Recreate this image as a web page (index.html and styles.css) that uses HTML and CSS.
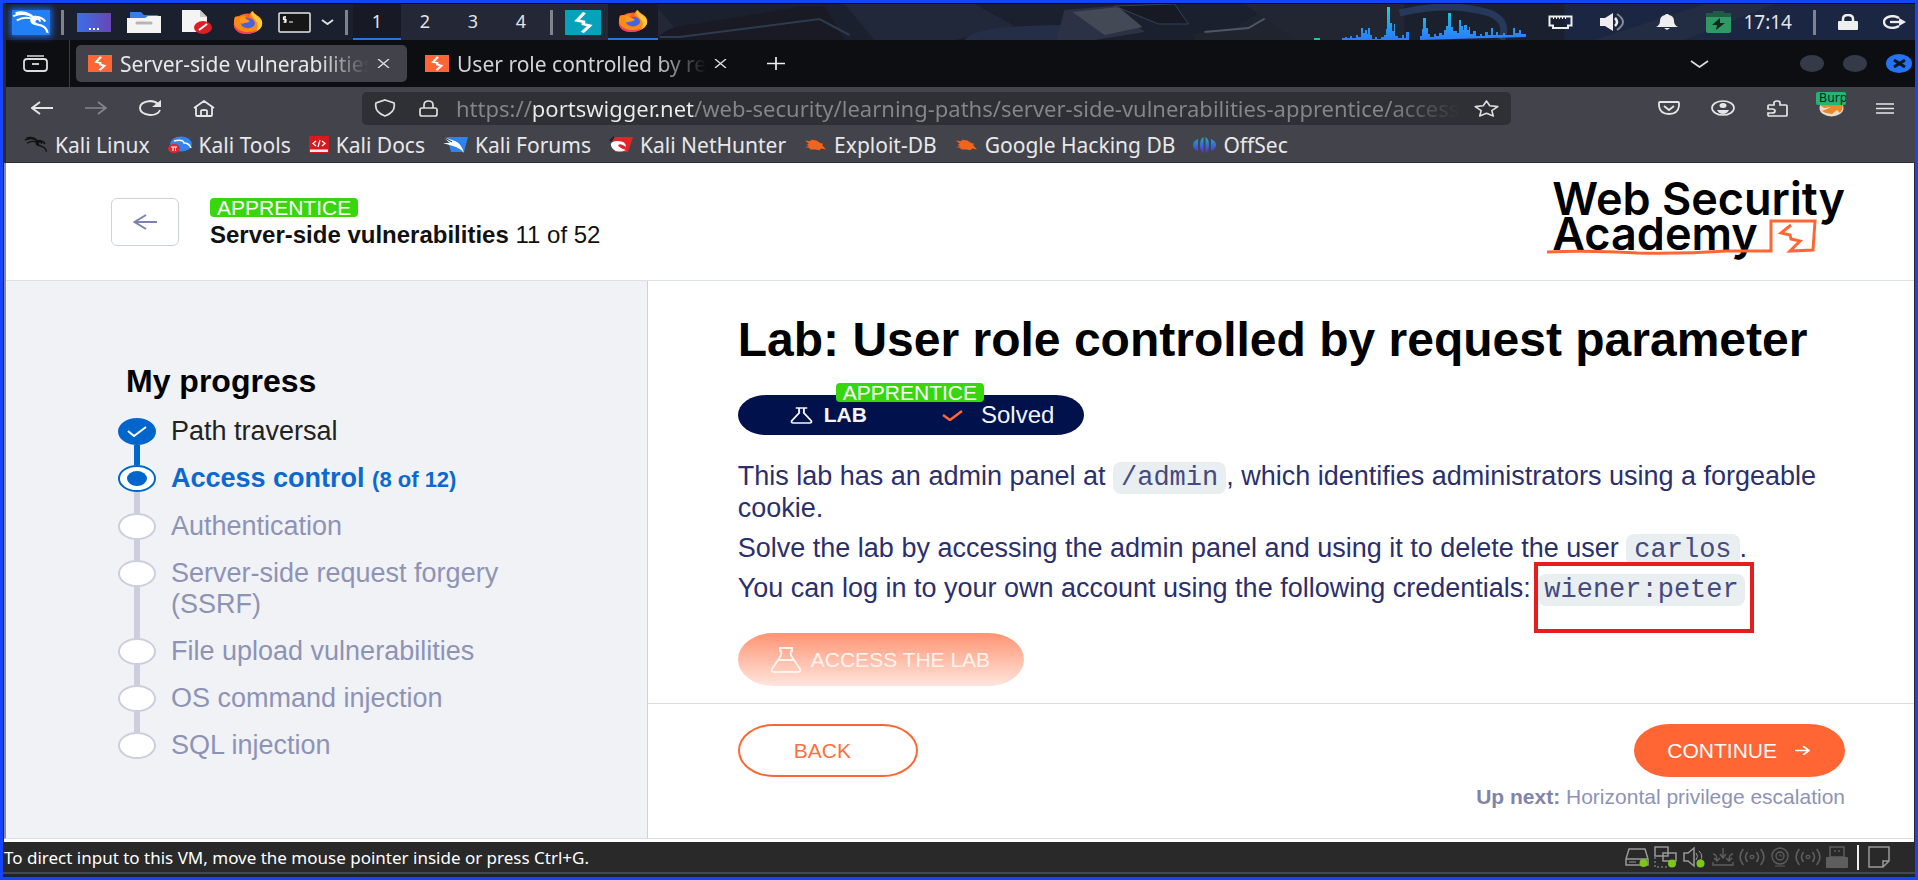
FILE: index.html
```html
<!DOCTYPE html>
<html lang="en">
<head>
<meta charset="utf-8">
<title>Server-side vulnerabilities</title>
<link rel="stylesheet" href="styles.css">
</head>
<body>
<svg class="defs" aria-hidden="true">
  <symbol id="dragon" viewBox="0 0 32 24" preserveAspectRatio="none">
    <path d="M1 6C7 2 14 4 18 7M3 3c6-2 12 0 16 5M4 10c5-3 10-3 14-1M18 7c5-1 8 1 10 4M18 7c-3 3-2 6 3 7 6 1 8 3 9 8M20 8c3 0 4 2 3 3" fill="none" stroke="currentColor" stroke-width="1.9"/>
    <path d="M17 6c4-1 6 0 7 2l-4 2c-1 2 1 3 4 4-4 1-8-1-8-4z" fill="currentColor"/>
  </symbol>
  <symbol id="firefox" viewBox="0 0 32 32" preserveAspectRatio="none">
    <circle cx="16" cy="17.500" r="14" fill="#ff5a2c"/>
    <path d="M3 8c2-1 4-1 5 0 2-2 5-2 7-1-2 1-3 3-3 5l5 2-4 3c4 2 8-1 9-4-1-2-2-4-5-5 1-4 1-6 4-8 1 5 8 7 9 14 1 8-4 16-13 17C8 32 1 26 2 17c0-4 0-6 1-9z" fill="#ff8a16"/>
    <circle cx="16" cy="17" r="7" fill="#4a62e0"/>
    <path d="M8 9c3-1 5 0 6 2l4 3c-2 3-5 2-8 4-1-2-3-6-2-9z" fill="#ff9a1f"/>
    <path d="M20 0c1 5 9 8 10 15 1 6-2 12-8 14 4-4 5-10 2-15-2-4-6-7-4-14z" fill="#ffc83d"/>
    <path d="M2 17c1 8 8 13 15 12 4 0 7-2 9-4-3 6-9 8-14 7C5 31 1 24 2 17z" fill="#f0405a"/>
  </symbol>
  <symbol id="burp" viewBox="0 0 24 24" preserveAspectRatio="none">
    <path d="M0 0h24v24H0z" fill="var(--tile)"/>
    <path d="M13 2.500L8 10l4.300 1.300V13.500L16.500 15 11.500 21.500" fill="none" stroke="#fff" stroke-width="2.400"/>
  </symbol>
  <symbol id="flask" viewBox="0 0 24 24" preserveAspectRatio="none">
    <path d="M6 1.500h12M9.500 2v6.500L1.800 19.500Q1 22.500 3.500 22.500h17Q23 22.500 22.200 19.500L14.500 8.500V2" fill="none" stroke="currentColor" stroke-width="2"/>
  </symbol>
  <symbol id="exploit" viewBox="0 0 24 16" preserveAspectRatio="none">
    <path d="M1 3l5 1 2-2 5 1 4 3 3 1-1 2 4 5-5-1-2 2-4-1-5 0-2-2-4-1 4-1-2-2 2-1z" fill="#f0641e"/>
  </symbol>
  <symbol id="signal" viewBox="0 0 24 18" preserveAspectRatio="none">
    <path d="M4 1Q-2 9 4 17M8 4q-4 5 0 10M20 1q6 8 0 16M16 4q4 5 0 10" fill="none" stroke="currentColor" stroke-width="1.500"/>
    <circle cx="12" cy="9" r="1.700" fill="none" stroke="currentColor" stroke-width="1.300"/>
  </symbol>
</svg>

<div class="frame">
  <header class="panel">
    <svg class="wallpaper" viewBox="0 0 1912 36" preserveAspectRatio="xMidYMid slice" aria-hidden="true">
      <path d="M0 0h1912v36H0z" fill="#1b202e"/>
      <path d="M380 0h270l30 36H350z" fill="#232736"/>
      <path d="M650 36q12-14 40-16l110-18h20l20 34z" fill="#191a23"/>
      <path d="M655 33h20l140-18 30 16" fill="none" stroke="#2e3b4e" stroke-width="2"/>
      <path d="M840 0h130l40 22-60 14H870z" fill="#20283a"/>
      <path d="M960 36q10-12 60-14l60-2v16z" fill="#242e46"/>
      <path d="M1060 6l50-4 30 26-50 8h-38z" fill="#2b3246"/>
      <path d="M1068 8l46-5 24 20-38 8z" fill="#434955"/>
      <path d="M1110 2l44 18h30L1170 0z" fill="#171923" stroke="#33405a"/>
      <path d="M1190 30l40-6 36-22 36 34h-112z" fill="#20242f"/>
      <path d="M1200 28l44-4 24-14" fill="none" stroke="#4e5766" stroke-width="2"/>
      <path d="M1240 0h160v36h-110z" fill="#222532"/>
      <path d="M1395 9q50-12 90 0 20 8 12 27" fill="none" stroke="#26395a" stroke-width="7"/>
      <path d="M1560 0h352v36h-352z" fill="#1b2742"/>
      <path d="M1590 36l110-36h70l-90 36z" fill="#222c42"/>
    </svg>
    <nav class="launchers" aria-label="Launchers">
      <button class="slot kali" aria-label="Applications"><svg width="38" height="25"><use href="#dragon"/></svg></button>
      <span class="divider"></span>
      <button class="slot" aria-label="Show desktop"><svg width="34" height="19" viewBox="0 0 34 19"><defs><linearGradient id="desk"><stop stop-color="#3a6fe8"/><stop offset="1" stop-color="#6a45b5"/></linearGradient></defs><path d="M0 0h34v19H0z" fill="url(#desk)"/><path d="M12 16h10" stroke="#fff" stroke-width="2" stroke-dasharray="2 2"/></svg></button>
      <button class="slot" aria-label="Files"><svg width="34" height="21" viewBox="0 0 34 21"><path d="M3 0h11l3 3h14v8H3z" fill="#3b7de8"/><path d="M0 6h18l3-2h13v17H0z" fill="#f4f4f4"/><path d="M10 11h14" stroke="#b5b5b5" stroke-width="3" stroke-linecap="round"/></svg></button>
      <button class="slot document" aria-label="Text editor"><svg width="32" height="24" viewBox="0 0 32 24"><path d="M2 0h18l7 7v15H2z" fill="#f4f4f4"/><path d="M20 0v7h7z" fill="#c9c9c9"/><ellipse cx="23" cy="17.500" rx="9" ry="6.500" fill="#dc1f26"/><path d="M19 20l8-6" stroke="#fff" stroke-width="2"/></svg></button>
      <button class="slot" aria-label="Firefox"><svg width="32" height="23"><use href="#firefox"/></svg></button>
      <button class="slot term" aria-label="Terminal"><svg width="33" height="21" viewBox="0 0 33 21"><rect x="1" y="1" width="31" height="19" rx="1" fill="#161616" stroke="#e8e8e8" stroke-width="1.500"/><path d="M8 5H5.500v2.500H8V10H5.500M7 4v7M11 10h4" fill="none" stroke="#fff" stroke-width="1.200"/></svg></button>
      <button class="slot more" aria-label="More terminals"><svg width="13" height="6" viewBox="0 0 13 6"><path d="M1 1l5.500 4L12 1" fill="none" stroke="#ddd" stroke-width="2"/></svg></button>
      <span class="divider"></span>
      <button class="workspace current">1</button><button class="workspace">2</button><button class="workspace">3</button><button class="workspace">4</button>
      <span class="divider"></span>
      <button class="slot teal" aria-label="Burp Suite"><svg width="36" height="25"><use href="#burp"/></svg></button>
      <button class="slot task" aria-label="Firefox window"><svg width="32" height="22"><use href="#firefox"/></svg></button>
    </nav>
    <div class="tray">
      <svg class="graph" width="220" height="34" viewBox="0 0 220 34" aria-hidden="true">
        <defs><linearGradient id="wave" x1="0" y1="0" x2="0" y2="34" gradientUnits="userSpaceOnUse"><stop stop-color="#18d8d0"/><stop offset=".6" stop-color="#239df0"/><stop offset="1" stop-color="#2a7bff"/></linearGradient></defs>
        <path d="M0 32h6v2H0z" fill="#18c8a8"/>
        <path fill="url(#wave)" d="M28 34v-2h3v-1h2v1h3v-2h2v2h4v-3h2v2h3v-9h2v5h2v-3h2v4h1v-6h2v7h2v4h3v-2h2v2h4v-2h3v-2h2v-6h1V1h3v16h2v8h2v-7h1v12h3v2h4v-3h2v3h2v-6h3v8zM104 34h2v-4h2v-7h1V12h3v10h2v6h2v3h4v-3h2v2h3v-3h3v2h2v-5h2v-4h2V7h3v14h2v4h4v2h2V14h2v6h2v4h1v-5h3v5h2v-3h1v7h3v-3h3v5h4v-2h2v2h3v-4h3v3h3v-7h2v7h3v-3h2v3h5v-2h2v2h8v-7h2v5h4v-3h2v4h5v3z"/>
      </svg>
      <button class="slot" aria-label="Network"><svg width="25" height="15" viewBox="0 0 25 15"><path d="M1.500 1.500h22v9H20V13H5v-2.500H1.500z" fill="none" stroke="#eee" stroke-width="2"/><path d="M5 3h15" stroke="#eee" stroke-width="2" stroke-dasharray="1 2"/></svg></button>
      <button class="slot" aria-label="Volume"><svg width="27" height="18" viewBox="0 0 27 18"><path d="M0 5h5l8-5v18l-8-5H0z" fill="#eee"/><path d="M15 5q4 4 0 8" fill="none" stroke="#eee" stroke-width="2.500"/><path d="M17 1q12 8 0 16" fill="none" stroke="#858b95" stroke-width="2"/></svg></button>
      <button class="slot" aria-label="Notifications"><svg width="22" height="16" viewBox="0 0 22 16"><path d="M11 0q2 0 2 1 5 1 5 6 0 4 4 6H0q4-2 4-6 0-5 5-6 0-1 2-1zM8 14h6l-3 2z" fill="#eee"/></svg></button>
      <button class="slot battery" aria-label="Battery"><svg width="25" height="22" viewBox="0 0 25 22"><path d="M7 0h11v3H7z" fill="#205c45"/><rect y="2" width="25" height="20" rx="2" fill="#2f9a66"/><path d="M0 4q0-2 2-2h21q2 0 2 2v2H0z" fill="#205c45"/><path d="M14 7l-8 7h5l-1 5 9-7h-5z" fill="#12281f"/></svg></button>
      <time class="clock">17:14</time>
      <span class="divider"></span>
      <button class="slot" aria-label="Lock"><svg width="20" height="16" viewBox="0 0 20 16"><path d="M5 8V5q0-4 5-4t5 4v3" fill="none" stroke="#eee" stroke-width="2.500"/><rect y="7" width="20" height="9" rx="1" fill="#eee"/></svg></button>
      <button class="slot" aria-label="Log out"><svg width="23" height="14" viewBox="0 0 23 14"><path d="M16 3Q13 1 9 1 1 2 1 7t8 6q4 0 7-2" fill="none" stroke="#eee" stroke-width="2.300"/><path d="M7 7h10" stroke="#eee" stroke-width="2.300"/><path d="M16 3l7 4-7 4z" fill="#eee"/></svg></button>
    </div>
  </header>

  <div class="tabbar">
    <button class="archive" aria-label="Firefox View"><svg width="25" height="17" viewBox="0 0 25 17"><path d="M4 1h17" stroke="#ddd" stroke-width="1.500"/><rect x="1" y="4" width="23" height="12" rx="3" fill="none" stroke="#ddd" stroke-width="1.800"/><path d="M9 9h7" stroke="#ddd" stroke-width="1.800"/></svg></button>
    <div class="tab active"><svg class="orange" width="24" height="17"><use href="#burp"/></svg><span class="tab-title">Server-side vulnerabilities</span><button class="close" aria-label="Close tab"><svg width="13" height="9" viewBox="0 0 13 9"><path d="M1 0l11 9M12 0L1 9" stroke="#ddd" stroke-width="1.400"/></svg></button></div>
    <div class="tab"><svg class="orange" width="24" height="17"><use href="#burp"/></svg><span class="tab-title">User role controlled by request</span><button class="close" aria-label="Close tab"><svg width="13" height="9" viewBox="0 0 13 9"><path d="M1 0l11 9M12 0L1 9" stroke="#ddd" stroke-width="1.400"/></svg></button></div>
    <button class="newtab" aria-label="New tab"><svg width="18" height="13" viewBox="0 0 18 13"><path d="M0 6.500h18M9 0v13" stroke="#eee" stroke-width="1.700"/></svg></button>
    <div class="window-controls">
      <button aria-label="List all tabs"><svg width="19" height="8" viewBox="0 0 19 8"><path d="M1 1l8.500 6L18 1" fill="none" stroke="#ddd" stroke-width="1.700"/></svg></button>
      <button class="dot" aria-label="Minimise"></button>
      <button class="dot" aria-label="Maximise"></button>
      <button class="dot quit" aria-label="Close"><svg width="13" height="9" viewBox="0 0 13 9"><path d="M1 1l11 7M12 1L1 8" stroke="#0e1626" stroke-width="3"/></svg></button>
    </div>
  </div>

  <div class="toolbar">
    <div class="nav-buttons">
      <button aria-label="Back"><svg width="22" height="14" viewBox="0 0 22 14"><path d="M22 7H2M9 1L1 7l8 6" fill="none" stroke="#e6e6e6" stroke-width="1.900"/></svg></button>
      <button aria-label="Forward"><svg width="22" height="14" viewBox="0 0 22 14"><path d="M0 7h20M13 1l8 6-8 6" fill="none" stroke="#85868b" stroke-width="1.700"/></svg></button>
      <button aria-label="Reload"><svg width="23" height="16" viewBox="0 0 23 16"><path d="M19 4Q16 1 11 1 1 2 1 8t10 7q8 0 10-5" fill="none" stroke="#e6e6e6" stroke-width="1.900"/><path d="M22 0v7h-9z" fill="#e6e6e6"/></svg></button>
      <button aria-label="Home"><svg width="22" height="17" viewBox="0 0 22 17"><path d="M1 8l10-7 10 7M3 7v8q0 1 1 1h14q1 0 1-1V7M8 16v-5q0-1 3-1t3 1v5" fill="none" stroke="#e6e6e6" stroke-width="1.800"/></svg></button>
    </div>
    <div class="urlbar">
      <svg width="22" height="18" viewBox="0 0 22 18"><path d="M11 1l9 3q2 9-9 13Q0 13 2 4z" fill="none" stroke="#ddd" stroke-width="1.700"/></svg>
      <svg width="19" height="17" viewBox="0 0 19 17"><path d="M5 8V5q0-4 4.500-4T14 5v3" fill="none" stroke="#ddd" stroke-width="1.700"/><rect x="1" y="8" width="17" height="8" rx="2" fill="none" stroke="#ddd" stroke-width="1.700"/></svg>
      <input class="address" type="text" aria-label="Address" value="https://portswigger.net/web-security/learning-paths/server-side-vulnerabilities-apprentice/access-control">
      <button aria-label="Bookmark this page"><svg width="25" height="17" viewBox="0 0 25 17"><path d="M12.500 1l3.300 4.800 8 .8-6 4 1.500 5.400-6.800-2.700L5.700 16l1.500-5.400-6-4 8-.8z" fill="none" stroke="#ddd" stroke-width="1.600" stroke-linejoin="round"/></svg></button>
    </div>
    <div class="tool-buttons">
      <button aria-label="Pocket"><svg width="22" height="14" viewBox="0 0 22 14"><path d="M1 2q0-1 1-1h18q1 0 1 1v3q-1 8-10 8T1 5zM6 5l5 4 5-4" fill="none" stroke="#e6e6e6" stroke-width="1.800"/></svg></button>
      <button aria-label="Account"><svg width="24" height="16" viewBox="0 0 24 16"><ellipse cx="12" cy="8" rx="11" ry="7" fill="none" stroke="#e6e6e6" stroke-width="1.700"/><ellipse cx="12" cy="5.500" rx="3.500" ry="2.500" fill="#e6e6e6"/><path d="M6 10h12q-2 4-6 4t-6-4z" fill="#e6e6e6"/></svg></button>
      <button aria-label="Extensions"><svg width="21" height="17" viewBox="0 0 21 17"><path d="M7 5V3q0-2 3-2t3 2v2h6q1 0 1 1v9q0 1-1 1H2q-1 0-1-1v-2h4q3 0 3-2T5 9H1V6q0-1 1-1z" fill="none" stroke="#e6e6e6" stroke-width="1.700"/></svg></button>
      <button class="foxy" aria-label="FoxyProxy"><svg width="25" height="17" viewBox="0 0 25 17"><ellipse cx="12.500" cy="8" rx="12" ry="8.500" fill="#e9dccb"/><path d="M1 5h23q0 4-3 8l-3-3-5 4-6-1-4-2 5-2 4-2-7 1z" fill="#e88a2a"/></svg><span class="proxy">Burp</span></button>
      <button aria-label="Menu"><svg width="18" height="11" viewBox="0 0 18 11"><path d="M0 1h18M0 5.500h18M0 10h18" stroke="#e6e6e6" stroke-width="1.500"/></svg></button>
    </div>
  </div>

  <nav class="bookmarks" aria-label="Bookmarks">
    <a href="#"><svg class="ink" width="24" height="17"><use href="#dragon"/></svg>Kali Linux</a>
    <a href="#"><svg width="24" height="17" viewBox="0 0 24 17"><ellipse cx="13" cy="8" rx="11" ry="7.500" fill="#2f86f2"/><path d="M6 5q9-2 10 2 5 0 7 5" fill="none" stroke="#fff" stroke-width="1.500"/><ellipse cx="6" cy="12.500" rx="6" ry="4.500" fill="#e2272f"/><path d="M3 11h6M5 11v4M7.500 11v4" stroke="#fff"/></svg>Kali Tools</a>
    <a href="#"><svg width="20" height="17" viewBox="0 0 20 17"><rect width="20" height="17" rx="1" fill="#d91920"/><path d="M1 13.500h18V16H1z" fill="#eee"/><path d="M7 5L4 7.500 7 10M13 5l3 2.500L13 10M11 4L9 11" fill="none" stroke="#fff" stroke-width="1.300"/></svg>Kali Docs</a>
    <a href="#"><svg width="25" height="17" viewBox="0 0 25 17"><path d="M4 1h21l-4 15H8z" fill="#2d84ec"/><path d="M0 1l12 4q6 2 9 12-3-4-8-6L0 7l7 0z" fill="#fff"/><path d="M0 1l9 5" stroke="#222"/></svg>Kali Forums</a>
    <a href="#"><svg width="24" height="17" viewBox="0 0 24 17"><path d="M3 1h21l-5 15H6z" fill="#e0252d"/><path d="M3 12Q-1 5 9 5q8 0 8 6-5-4-8-2 1 3 8 5-9 4-14-2z" fill="#fff"/><path d="M1 5l4-4" stroke="#222" stroke-width="2"/></svg>Kali NetHunter</a>
    <a href="#"><svg width="23" height="13"><use href="#exploit"/></svg>Exploit-DB</a>
    <a href="#"><svg width="23" height="13"><use href="#exploit"/></svg>Google Hacking DB</a>
    <a href="#"><svg width="23" height="16" viewBox="0 0 23 16"><defs><linearGradient id="offsec" x1="0" y1="0" x2="0" y2="16" gradientUnits="userSpaceOnUse"><stop stop-color="#11b5c7"/><stop offset="1" stop-color="#5a2be0"/></linearGradient></defs><path d="M5 2v12Q0 12 0 8t5-6zM10.500 0v16Q7 14 7 8t3.500-8zM12.500 0v16Q16 14 16 8t-3.500-8zM18 2v12q5-2 5-6t-5-6z" fill="url(#offsec)"/></svg>OffSec</a>
  </nav>

  <div class="page">
    <header class="page-header">
      <button class="return" aria-label="Back to path"><svg width="24" height="16" viewBox="0 0 24 16"><path d="M24 8H2M13 1L1.500 8 13 15" fill="none" stroke="#7c81ae" stroke-width="2"/></svg></button>
      <div class="path">
        <span class="level">APPRENTICE</span>
        <p class="path-title"><strong>Server-side vulnerabilities</strong> 11 of 52</p>
      </div>
      <a class="logo" href="#">Web Security<br>Academy<svg class="logo-mark" width="271" height="38" viewBox="0 0 271 38" aria-hidden="true"><path d="M0 33q40-2 90 1 45 1 90-2h44V2h44l-2 29-23 1 10-10-9-2-1-4-9-2 10-8" fill="none" stroke="#ff6633" stroke-width="3"/></svg></a>
    </header>

    <div class="columns">
      <aside class="sidebar">
        <h2>My progress</h2>
        <ol class="steps">
          <li class="done"><span class="track"><span class="marker"><svg width="20" height="11" viewBox="0 0 20 11"><path d="M1 5l6 5L19 1" fill="none" stroke="#fff" stroke-width="2"/></svg></span></span><a href="#">Path traversal</a></li>
          <li class="now"><span class="track"><span class="marker"></span></span><a href="#">Access control <small>(8 of 12)</small></a></li>
          <li><span class="track"><span class="marker"></span></span><a href="#">Authentication</a></li>
          <li><span class="track"><span class="marker"></span></span><a href="#">Server-side request forgery (SSRF)</a></li>
          <li><span class="track"><span class="marker"></span></span><a href="#">File upload vulnerabilities</a></li>
          <li><span class="track"><span class="marker"></span></span><a href="#">OS command injection</a></li>
          <li><span class="track"><span class="marker"></span></span><a href="#">SQL injection</a></li>
        </ol>
      </aside>
      <main class="content">
        <section class="lab">
          <h1>Lab: User role controlled by request parameter</h1>
          <div class="banner">
            <span class="level">APPRENTICE</span>
            <svg width="23" height="17"><use href="#flask"/></svg><strong>LAB</strong>
            <svg class="tick" width="21" height="11" viewBox="0 0 21 11"><path d="M1 5l7 5L20 1" fill="none" stroke="#ff6633" stroke-width="2.500"/></svg><span>Solved</span>
          </div>
          <p>This lab has an admin panel at <code>/admin</code>, which identifies administrators using a forgeable cookie.</p>
          <p>Solve the lab by accessing the admin panel and using it to delete the user <code>carlos</code>.</p>
          <p>You can log in to your own account using the following credentials: <code class="marked">wiener:peter</code></p>
          <button class="access"><svg width="30" height="26" viewBox="0 0 30 26"><path d="M9 1h12v3h-1q-1 4 1 6l8 12q1 3-2 3H3q-3 0-2-3L9 10q2-2 1-6H9zM7 13h16" fill="none" stroke="currentColor" stroke-width="1.800"/></svg>ACCESS THE LAB</button>
        </section>
        <footer class="pager">
          <button class="back">BACK</button>
          <div class="forward">
            <button class="continue">CONTINUE<svg width="15" height="9" viewBox="0 0 15 9"><path d="M0 4.500h14M8 0l6 4.500L8 9" fill="none" stroke="currentColor" stroke-width="1.700"/></svg></button>
            <p><strong>Up next:</strong> Horizontal privilege escalation</p>
          </div>
        </footer>
      </main>
    </div>
  </div>

  <footer class="status">
    <span>To direct input to this VM, move the mouse pointer inside or press Ctrl+G.</span>
    <div class="devices">
      <svg width="24" height="20" viewBox="0 0 24 20"><path d="M4 2h16l3 10v6H1v-6zM1 12h22" fill="none" stroke="#999" stroke-width="1.500"/><path d="M4 15h7" stroke="#999"/><circle cx="18.500" cy="16" r="4" fill="#7ec61c"/></svg>
      <svg width="24" height="22" viewBox="0 0 24 22"><path d="M1 1h13v9H1zM9 7h13v8H9z" fill="#292929" stroke="#999" stroke-width="1.500"/><path d="M1 11v10h12" fill="none" stroke="#999" stroke-dasharray="2 2"/><circle cx="18" cy="17.500" r="4" fill="#7ec61c"/></svg>
      <svg width="24" height="22" viewBox="0 0 24 22"><path d="M1 7h4l6-5v18l-6-5H1z" fill="none" stroke="#999" stroke-width="1.500"/><path d="M13 7q3 3 0 7M16 5q5 5 1 10" fill="none" stroke="#999"/><circle cx="17.500" cy="17.500" r="4" fill="#7ec61c"/></svg>
      <svg width="22" height="18" viewBox="0 0 22 18"><path d="M1 14v3h20v-3M11 0v9M8 6l3 4 3-4M1 6q4 0 4 7M2 10l3 3 3-3M21 6q-4 0-4 7M14 10l3 3 3-3" fill="none" stroke="currentColor" stroke-width="1.400"/></svg>
      <svg width="26" height="18"><use href="#signal"/></svg>
      <svg width="20" height="20" viewBox="0 0 20 20"><circle cx="10" cy="9" r="8" fill="none" stroke="currentColor" stroke-width="1.400"/><circle cx="10" cy="9" r="4" fill="none" stroke="currentColor" stroke-width="1.400"/><path d="M10 7v2h2M5 19h10" stroke="currentColor" fill="none"/></svg>
      <svg width="26" height="18"><use href="#signal"/></svg>
      <svg width="22" height="22" viewBox="0 0 22 22"><path d="M4 1h14v10H4z" fill="none" stroke="currentColor" stroke-width="1.500"/><path d="M8 5h2M12 5h2" stroke="currentColor" stroke-width="1.500"/><rect y="11" width="22" height="11" rx="1" fill="currentColor"/></svg>
      <span class="bar"></span>
      <svg width="22" height="22" viewBox="0 0 22 22"><path d="M1 1h20v14l-6 6H1zM21 15h-6v6" fill="none" stroke="#999" stroke-width="1.500"/></svg>
    </div>
  </footer>
</div>
</body>
</html>
```
FILE: styles.css
```css
* { box-sizing: border-box; }

body {
  margin: 0;
  background: #292929;
  font-family: "Liberation Sans", Arial, sans-serif;
}

button {
  border: 0;
  padding: 0;
  background: none;
  font: inherit;
  color: inherit;
  display: flex;
  align-items: center;
  justify-content: center;
}

a { color: inherit; text-decoration: none; }

h1, h2, p, ol { margin: 0; padding: 0; }

svg { flex: none; display: block; }

.defs { position: absolute; width: 0; height: 0; }

.frame {
  min-height: 100vh;
  display: flex;
  flex-direction: column;
  border: 3px solid #1644fb;
}

/* desktop panel */
.panel {
  position: relative;
  display: flex;
  justify-content: space-between;
  height: 37px;
  margin-left: 3px;
  border-top: 1px solid #05060a;
  font-family: "Noto Sans", "Open Sans", sans-serif;
  font-size: 18px;
  color: #e2e4e8;
}

.wallpaper { position: absolute; inset: 0; width: 100%; height: 100%; }

.launchers, .tray { position: relative; display: flex; align-items: stretch; }

.slot { width: 50px; }
.document { width: 54px; }
.term { width: 42px; }
.more { width: 25px; }
.kali svg { background: #2180f5; box-shadow: 0 0 6px 2px #1c63d8; color: #fff; }
.teal { --tile: #06a2bb; }
.orange { --tile: #ff6633; }

.divider {
  width: 3px;
  height: 25px;
  margin: 0 5px;
  align-self: center;
  background: #7f838c;
}

.workspace { width: 48px; border-bottom: 2px solid transparent; }
.workspace.current, .task { background: #171a25; border-bottom: 2px solid #2a72ea; }

.tray .slot { width: 53px; }
.tray .battery { width: 50px; }
.tray .slot:last-child { width: 41px; }
.graph { align-self: flex-end; }
.clock { padding: 0 16px 0 0; align-self: center; font-size: 19px; }

/* browser chrome */
.tabbar, .toolbar, .bookmarks {
  margin-left: 3px;
  display: flex;
  align-items: center;
  font-family: "Noto Sans", "Open Sans", sans-serif;
  font-size: 21px;
  color: #e8e8ea;
}

.tabbar { height: 47px; background: #0d0e12; }

.archive { width: 64px; padding-right: 4px; align-self: stretch; border-right: 1px solid #3b3c41; }

.tab {
  display: flex;
  align-items: center;
  gap: 8px;
  width: 331px;
  height: 37px;
  margin-left: 6px;
  padding: 0 17px 0 12px;
  border-radius: 5px;
}

.tab.active { background: #42434a; }
.tab:not(.active) .tab-title { color: #d2d2d5; }

.tab-title {
  flex: 1;
  overflow: hidden;
  white-space: nowrap;
  mask-image: linear-gradient(to right, #000 80%, transparent);
}

.newtab { width: 64px; }

.window-controls { margin-left: auto; display: flex; align-items: center; gap: 19px; padding-right: 3px; }
.window-controls button:first-child { margin-right: 72px; }
.dot { width: 24px; height: 17px; border-radius: 50%; background: #353a48; }
.quit { width: 26px; height: 19px; background: #2374f5; }

.toolbar { height: 42px; background: #43444b; }
.nav-buttons { display: flex; gap: 10px; padding-left: 14px; }
.nav-buttons button { width: 44px; }

.urlbar {
  flex: 1;
  display: flex;
  align-items: center;
  height: 33px;
  margin: 0 134px 0 136px;
  padding: 0 12px;
  border-radius: 5px;
  background: #2f3035;
}

.urlbar svg + svg { margin-left: 23px; }

.address {
  flex: 1;
  min-width: 0;
  margin: 0 14px 0 18px;
  padding: 0;
  border: 0;
  font: inherit;
  font-size: 22px;
  color: transparent;
  background: linear-gradient(to right, #85868b 76px, #ececee 76px, #ececee 238px, #85868b 238px, #85868b 93%, #2f3035);
  background-clip: text;
}

.tool-buttons { display: flex; gap: 6px; padding-right: 6px; }
.tool-buttons button { width: 48px; }

.foxy { position: relative; }
.proxy {
  position: absolute;
  top: -8px;
  left: 9px;
  width: 30px;
  overflow: hidden;
  border-radius: 2px;
  background: #22b573;
  color: #10251c;
  font: 12px/13px "DejaVu Sans", sans-serif;
  text-align: left;
  padding-left: 3px;
}

.bookmarks {
  height: 34px;
  gap: 18px;
  padding: 0 0 2px 18px;
  background: #43444b;
  border-bottom: 1px solid #2e2f33;
}

.bookmarks a { display: flex; align-items: center; gap: 7px; white-space: nowrap; }
.ink { color: #121212; }

/* web page */
.page {
  flex: 1;
  display: flex;
  flex-direction: column;
  margin: 0 1px 3px 1px;
  border-left: 2px solid #8b8d92;
  background: #fff;
  border-bottom: 1px solid #dcdfe2;
  box-shadow: 0 3px #fff;
}

.page-header {
  display: flex;
  align-items: center;
  padding: 18px 69px 17px 105px;
  border-bottom: 1px solid #dce1e4;
  min-height: 117px;
}

.return {
  width: 68px;
  height: 48px;
  border: 1px solid #ccd3d7;
  border-radius: 6px;
}

.path { margin-left: 31px; padding-top: 2px; }

.level {
  display: inline-block;
  padding: 0 7px;
  border-radius: 4px;
  background: #38d60d;
  color: #fff;
  font-size: 21px;
  line-height: 19px;
}

.path .level { display: block; width: max-content; }
.path-title { margin-top: 4px; font-size: 24px; line-height: 28px; color: #111; }

.logo {
  position: relative;
  margin-left: auto;
  padding-bottom: 12px;
  font-family: Inter, sans-serif;
  font-weight: 600;
  font-size: 45px;
  line-height: 35px;
  color: #000;
}

.logo-mark { position: absolute; left: -5px; top: 38px; }

.columns { flex: 1; display: grid; grid-template-columns: 37fr 73fr; }

.sidebar {
  padding: 80px 90px 40px 112px;
  background: #f0f2f6;
  border-right: 1px solid #ccd3d7;
}

.sidebar h2 { margin: 0 0 17px 8px; font-size: 32px; line-height: 40px; color: #000; }

.steps { list-style: none; font-size: 27px; line-height: 31px; color: #8e93b5; }
.steps li { display: flex; gap: 15px; }
.steps li a { margin-top: -2px; padding-bottom: 18px; }

.track { flex: none; display: flex; flex-direction: column; align-items: center; }
.track::after { content: ""; flex: 1; width: 6px; background: #cccddd; }
.steps li:last-child .track::after { display: none; }

.marker {
  display: flex;
  align-items: center;
  justify-content: center;
  width: 38px;
  height: 27px;
  border: 2px solid #cccddd;
  border-radius: 50%;
  background: #fff;
}

.done { color: #222; }
.done .marker { background: #0066cc; border-color: #0066cc; }
.done .track::after { background: #0066cc; }
.now { color: #0b69cf; font-weight: bold; }
.now .marker { border-color: #0066cc; }
.now .marker::before { content: ""; width: 20px; height: 15px; border-radius: 50%; background: #0066cc; }
.now small { font-size: 22px; }

.content { display: flex; flex-direction: column; }

.lab { padding: 31px 69px 17px 90px; color: #2b2f6e; font-size: 27px; line-height: 32px; }
.lab h1 { font-size: 48px; line-height: 56px; color: #000; white-space: nowrap; }

.banner {
  position: relative;
  display: flex;
  align-items: center;
  width: max-content;
  height: 40px;
  margin: 27px 0 25px;
  padding: 0 30px 0 52px;
  border-radius: 28px / 20px;
  background: #00114c;
  color: #f4f5fa;
  font-size: 24px;
  line-height: 20px;
}

.banner .level { position: absolute; top: -12px; left: 98px; }
.banner strong { margin: 0 75px 0 11px; font-size: 21px; }
.tick { margin-right: 18px; }

.lab p + p { margin-top: 8px; }

code {
  padding: 1px 8px;
  border-radius: 8px;
  background: #e9eef1;
  font-family: "Liberation Mono", "Courier New", monospace;
  font-size: 27px;
  line-height: 24px;
  color: #454a80;
}

.marked { position: relative; padding: 1px 6px; }
.marked::after { content: ""; position: absolute; inset: -12px -9px -27px -4px; border: 4px solid #e81c1c; }

.access, .back, .continue {
  height: 53px;
  border-radius: 36px / 27px;
  font-size: 21px;
}

.access {
  gap: 10px;
  margin-top: 29px;
  padding: 0 34px 0 33px;
  background: linear-gradient(#ff9472, #ffe5dc);
  color: #fff3ee;
}

.pager {
  display: flex;
  justify-content: space-between;
  align-items: flex-start;
  padding: 20px 69px 0 90px;
  border-top: 1px solid #d9dcdf;
}

.back { padding: 0 65px 0 54px; border: 2px solid #ff6633; color: #ff7040; }
.continue { gap: 18px; padding: 0 35px 0 33px; background: #ff6633; color: #fff; }

.forward { display: flex; flex-direction: column; align-items: flex-end; }
.forward p { margin-top: 7px; font-size: 21px; line-height: 26px; color: #8e93b5; }
.forward strong { color: #8084ab; }

/* virtual machine status line */
.status {
  display: flex;
  align-items: center;
  justify-content: space-between;
  height: 35px;
  padding: 0 25px 2px 1px;
  border-bottom: 3px solid #1a2530;
  background: linear-gradient(#292929 30px, #44474b 30px);
  color: #fff;
  font: 17px "Noto Sans", "Open Sans", sans-serif;
}

.devices { display: flex; align-items: center; gap: 5px; color: #5e5e5e; }
.bar { width: 2px; height: 25px; margin: 0 4px; background: #eee; }
```
